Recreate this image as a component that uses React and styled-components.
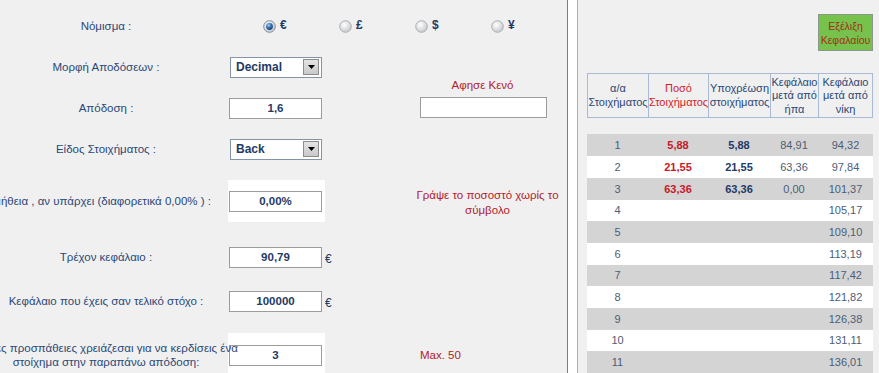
import React from 'react';
import styled, { createGlobalStyle } from 'styled-components';

const GlobalStyle = createGlobalStyle`
  html, body { margin: 0; padding: 0; background: #f0f0f0; }
  body { font-family: "Liberation Sans", Arial, sans-serif; }
`;

const Page = styled.div`
  display: flex;
  width: 879px;
  height: 373px;
  overflow: hidden;
  background: #f0f0f0;
`;

const LeftPanel = styled.div`
  width: 567px;
  flex: none;
  padding-top: 6px;
  box-sizing: border-box;
`;

const Row = styled.div`
  display: grid;
  grid-template-columns: 228px 97px 1fr;
  grid-template-rows: ${p => p.$h}px;
  align-items: center;
  height: ${p => p.$h}px;
`;

const LabelCell = styled.div`
  position: relative;
  z-index: 1;
  display: flex;
  justify-content: center;
  padding-right: ${p => (p.$pr ?? 16)}px;
  white-space: nowrap;
  font-size: 11.5px;
  line-height: 14px;
  color: #2a4877;
  text-align: center;
`;

const InputCell = styled.div`
  display: flex;
  align-items: center;
  height: ${p => (p.$block ? `${p.$block}px` : 'auto')};
  background: ${p => (p.$block ? '#ffffff' : 'transparent')};
`;

const TextInput = styled.input`
  width: ${p => p.$w || 93}px;
  height: 21px;
  box-sizing: border-box;
  margin: 0 0 0 1px;
  padding: 0;
  border: 1px solid #9c9c9c;
  background: #fff;
  font-family: "Liberation Sans", Arial, sans-serif;
  font-weight: bold;
  font-size: 11.5px;
  color: #1e3a66;
  text-align: center;
  outline: none;
`;

const SelectBox = styled.div`
  width: 92px;
  height: 21px;
  margin-left: 2px;
  box-sizing: border-box;
  border: 1px solid #8393a8;
  background: #fff;
  display: flex;
  align-items: center;
  justify-content: space-between;
  padding-left: 5px;
  font-weight: bold;
  font-size: 12px;
  color: #1e3a66;
`;

const SelectArrow = styled.span`
  width: 16px;
  height: 16px;
  margin-right: 2px;
  box-sizing: border-box;
  border: 1px solid #8c8c8c;
  background: linear-gradient(#e4e4e4, #c9c9c9);
  display: flex;
  align-items: center;
  justify-content: center;
`;

const Currency = styled.span`
  font-size: 12px;
  color: #1e3a66;
  padding-top: 3px;
`;

const RadioRow = styled.div`
  grid-column: 2 / 4;
  display: flex;
  padding-left: 35px;
`;

const RadioGroup = styled.div`
  width: 77px;
  display: flex;
  align-items: flex-start;
  gap: 4px;
`;

const RadioSymbol = styled.span`
  font-weight: bold;
  font-size: 12px;
  line-height: 12px;
  color: #1e3a66;
  margin-top: -1px;
`;

const HintStack = styled.div`
  align-self: end;
  padding: 0 0 10px 94px;
  width: 127px;
  display: flex;
  flex-direction: column;
  align-items: center;
  gap: 4px;
`;

const Hint = styled.div`
  font-size: 11.5px;
  line-height: 15px;
  color: #b3202c;
  text-align: ${p => p.$align || 'center'};
  width: ${p => (p.$w ? `${p.$w}px` : 'auto')};
  padding-left: ${p => p.$pl || 0}px;
  padding-top: ${p => p.$pt || 0}px;
`;

const Divider = styled.div`
  width: 11px;
  flex: none;
  box-sizing: border-box;
  background: #fff;
  border-left: 1px solid #5c80c2;
  border-right: 1px solid #9fb2d2;
`;

const RightPanel = styled.div`
  flex: 1;
  padding: 14px 7px 0 9px;
  display: flex;
  flex-direction: column;
`;

const GreenButton = styled.div`
  align-self: flex-end;
  width: 55px;
  height: 41px;
  box-sizing: border-box;
  background: #77c14d;
  border: 1px solid #8b978b;
  color: #a0301a;
  font-size: 10.5px;
  line-height: 14px;
  display: flex;
  align-items: center;
  justify-content: center;
  text-align: center;
  white-space: nowrap;
`;

const COLS = '60px 59px 61px 47px 53px';

const HeaderGrid = styled.div`
  margin-top: 22px;
  width: 286px;
  box-sizing: border-box;
  display: grid;
  grid-template-columns: ${COLS};
  gap: 1px;
  padding: 1px;
  background: #a9bbd4;
`;

const HeadCell = styled.div`
  height: 43px;
  background: #f0f0f0;
  display: flex;
  align-items: center;
  justify-content: center;
  text-align: center;
  font-size: 11px;
  line-height: 13.5px;
  color: ${p => (p.$red ? '#d01c2c' : '#2a4877')};
  white-space: nowrap;
`;

const Body = styled.div`
  margin-top: 16px;
  width: 286px;
`;

const BodyRow = styled.div`
  display: grid;
  grid-template-columns: 61px 60px 62px 48px 55px;
  height: 21.7px;
  align-items: center;
  background: ${p => (p.$alt ? '#d4d4d4' : '#ffffff')};
  font-size: 11px;
`;

const Num = styled.span`
  text-align: center;
  color: ${p => (p.$kind === 'red' ? '#c8182a' : p.$kind === 'bold' ? '#1e3a66' : '#4c5d76')};
  font-weight: ${p => (p.$kind === 'red' || p.$kind === 'bold' ? 'bold' : 'normal')};
`;

const RadioIcon = ({ checked }) => (
  <svg width="13" height="13" viewBox="0 0 13 13">
    <defs>
      <radialGradient id="rgOuter" cx="40%" cy="35%" r="70%">
        <stop offset="0" stopColor="#ffffff" />
        <stop offset="1" stopColor="#c4c6c9" />
      </radialGradient>
      <radialGradient id="rgDot" cx="38%" cy="32%" r="70%">
        <stop offset="0" stopColor="#a8d0f5" />
        <stop offset="0.5" stopColor="#3a72b6" />
        <stop offset="1" stopColor="#163f74" />
      </radialGradient>
    </defs>
    <circle cx="6.5" cy="6.5" r="5.8" fill="url(#rgOuter)" stroke={checked ? '#7f8c9c' : '#a9aeb4'} strokeWidth="1" />
    {checked && <circle cx="6.5" cy="6.5" r="3.4" fill="url(#rgDot)" />}
  </svg>
);

const Arrow = () => (
  <svg width="7" height="4" viewBox="0 0 7 4">
    <path d="M0 0 H7 L3.5 4 Z" fill="#000" />
  </svg>
);

const currencies = [
  { s: '€', checked: true },
  { s: '£' },
  { s: '$' },
  { s: '¥' },
];

const rows = [
  ['1', '5,88', '5,88', '84,91', '94,32'],
  ['2', '21,55', '21,55', '63,36', '97,84'],
  ['3', '63,36', '63,36', '0,00', '101,37'],
  ['4', '', '', '', '105,17'],
  ['5', '', '', '', '109,10'],
  ['6', '', '', '', '113,19'],
  ['7', '', '', '', '117,42'],
  ['8', '', '', '', '121,82'],
  ['9', '', '', '', '126,38'],
  ['10', '', '', '', '131,11'],
  ['11', '', '', '', '136,01'],
];

export default function App() {
  return (
    <>
      <GlobalStyle />
      <Page>
        <LeftPanel>
          <Row $h={40}>
            <LabelCell>Νόμισμα :</LabelCell>
            <RadioRow>
              {currencies.map(c => (
                <RadioGroup key={c.s}>
                  <RadioIcon checked={c.checked} />
                  <RadioSymbol>{c.s}</RadioSymbol>
                </RadioGroup>
              ))}
            </RadioRow>
          </Row>
          <Row $h={42}>
            <LabelCell>Μορφή Αποδόσεων :</LabelCell>
            <InputCell>
              <SelectBox>
                Decimal
                <SelectArrow><Arrow /></SelectArrow>
              </SelectBox>
            </InputCell>
          </Row>
          <Row $h={40}>
            <LabelCell>Απόδοση :</LabelCell>
            <InputCell>
              <TextInput readOnly value="1,6" />
            </InputCell>
            <HintStack>
              <Hint>Αφησε Κενό</Hint>
              <TextInput readOnly value="" $w={127} />
            </HintStack>
          </Row>
          <Row $h={42}>
            <LabelCell>Είδος Στοιχήματος :</LabelCell>
            <InputCell>
              <SelectBox>
                Back
                <SelectArrow><Arrow /></SelectArrow>
              </SelectBox>
            </InputCell>
          </Row>
          <Row $h={62}>
            <LabelCell $pr={44}>Προμήθεια , αν υπάρχει (διαφορετικά 0,00% ) :</LabelCell>
            <InputCell $block={42}>
              <TextInput readOnly value="0,00%" />
            </InputCell>
            <Hint $w={145} $pl={90} $pt={4}>
              Γράψε το ποσοστό χωρίς το<br />σύμβολο
            </Hint>
          </Row>
          <Row $h={50}>
            <LabelCell>Τρέχον κεφάλαιο :</LabelCell>
            <InputCell>
              <TextInput readOnly value="90,79" />
            </InputCell>
            <Currency>€</Currency>
          </Row>
          <Row $h={38}>
            <LabelCell>Κεφάλαιο που έχεις σαν τελικό στόχο :</LabelCell>
            <InputCell>
              <TextInput readOnly value="100000" />
            </InputCell>
            <Currency>€</Currency>
          </Row>
          <Row $h={70}>
            <LabelCell>
              Πόσες προσπάθειες χρειάζεσαι για να κερδίσεις ένα<br />στοίχημα στην παραπάνω απόδοση:
            </LabelCell>
            <InputCell $block={44}>
              <TextInput readOnly value="3" />
            </InputCell>
            <Hint $align="left" $pl={95}>Max. 50</Hint>
          </Row>
        </LeftPanel>
        <Divider />
        <RightPanel>
          <GreenButton>Εξέλιξη<br />Κεφαλαίου</GreenButton>
          <HeaderGrid>
            <HeadCell>α/α<br />Στοιχήματος</HeadCell>
            <HeadCell $red>Ποσό<br />Στοιχήματος</HeadCell>
            <HeadCell>Υποχρέωση<br />στοιχήματος</HeadCell>
            <HeadCell>Κεφάλαιο<br />μετά από<br />ήπα</HeadCell>
            <HeadCell>Κεφάλαιο<br />μετά από<br />νίκη</HeadCell>
          </HeaderGrid>
          <Body>
            {rows.map((r, i) => (
              <BodyRow key={r[0]} $alt={i % 2 === 0}>
                <Num>{r[0]}</Num>
                <Num $kind="red">{r[1]}</Num>
                <Num $kind="bold">{r[2]}</Num>
                <Num>{r[3]}</Num>
                <Num>{r[4]}</Num>
              </BodyRow>
            ))}
          </Body>
        </RightPanel>
      </Page>
    </>
  );
}
